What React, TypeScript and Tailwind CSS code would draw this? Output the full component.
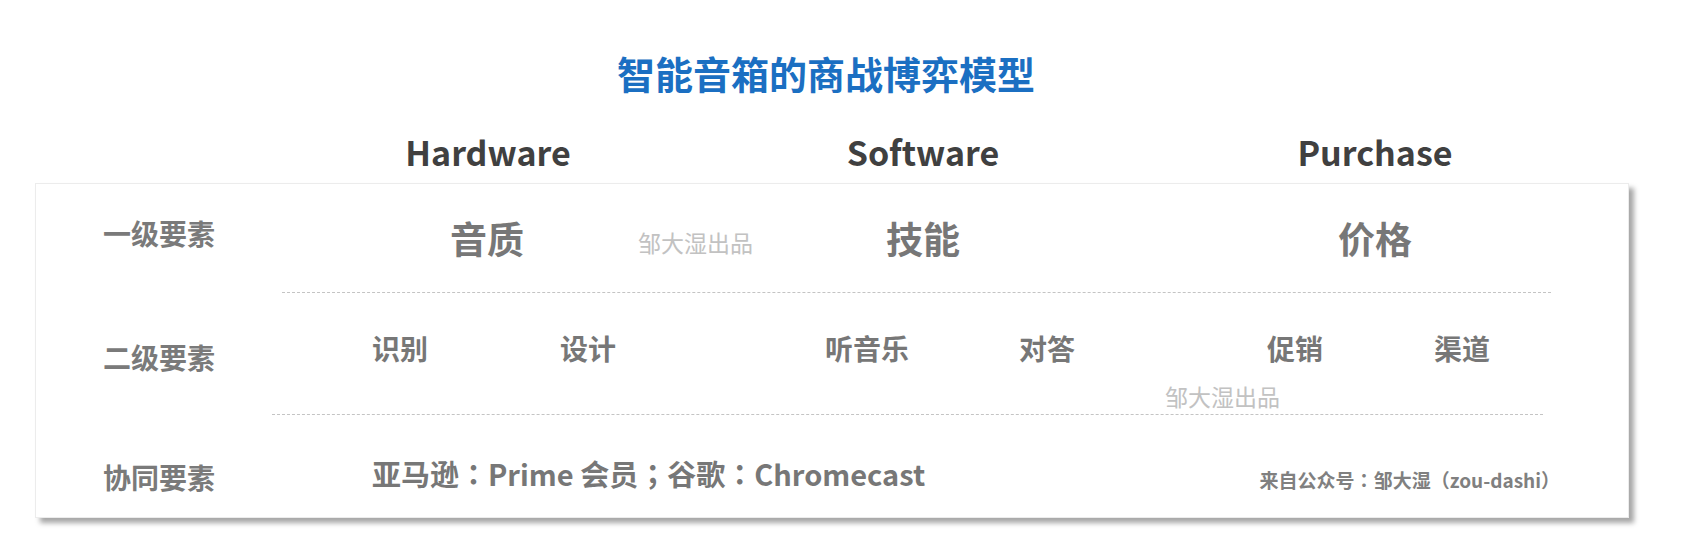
import React from "react";

const F = { fontFamily: '"Noto Sans CJK SC", "Noto Sans", sans-serif' };
const TC = { fontFamily: '"Noto Sans CJK TC", "Noto Sans CJK SC", sans-serif' };

export default function App() {
  return (
    <div className="w-[1689px] h-[545px] bg-white overflow-hidden" style={F}>
      {/* Title */}
      <div className="pt-[54px] flex justify-center">
        <div className="ml-[-37px] text-[38px] leading-none font-bold text-[#1b6fc2] whitespace-nowrap">
          智能音箱的商战博弈模型
        </div>
      </div>

      {/* Column headers */}
      <div className="mt-[43px] flex pl-[36px]">
        <div className="w-[234px] shrink-0" />
        <div className="w-[436px] shrink-0 flex justify-center text-[34px] leading-none font-bold text-[#404040]">Hardware</div>
        <div className="w-[434px] shrink-0 flex justify-center text-[34px] leading-none font-bold text-[#404040]">Software</div>
        <div className="w-[470px] shrink-0 flex justify-center text-[34px] leading-none font-bold text-[#404040]">Purchase</div>
      </div>

      {/* Card */}
      <div className="mt-[14px] ml-[35px] w-[1594px] h-[335px] bg-white border border-[#ececec] shadow-[5px_5px_5px_rgba(0,0,0,0.35)] flex flex-col">
        {/* Row 1 */}
        <div className="h-[108px] flex items-start">
          <div className="w-[234px] shrink-0 pl-[67px] mt-[35px] text-[28px] leading-none font-bold text-[#7a7a7a] whitespace-nowrap">一级要素</div>
          <div className="w-[436px] shrink-0 flex items-start pl-[180px]">
            <div className="shrink-0 whitespace-nowrap mt-[36px] text-[37px] leading-none font-bold text-[#777777]">音质</div>
            <div className="shrink-0 mt-[47px] ml-[114px] text-[23px] leading-none text-[#c2c2c2] whitespace-nowrap">邹大湿出品</div>
          </div>
          <div className="w-[434px] shrink-0 flex justify-center">
            <div className="mt-[36px] text-[37px] leading-none font-bold text-[#777777] whitespace-nowrap">技能</div>
          </div>
          <div className="w-[470px] shrink-0 flex justify-center">
            <div className="mt-[36px] text-[37px] leading-none font-bold text-[#777777] whitespace-nowrap">价格</div>
          </div>
        </div>
        <div className="ml-[246px] w-[1269px] border-t border-dashed border-[#c4c4c4]" />

        {/* Row 2 */}
        <div className="h-[121px] flex flex-col">
          <div className="flex items-start">
            <div className="w-[234px] shrink-0 pl-[67px] mt-[50px] text-[28px] leading-none font-bold text-[#7a7a7a] whitespace-nowrap">二级要素</div>
            <div className="w-[436px] shrink-0 flex items-start pl-[102px] mt-[41px] text-[28px] leading-none font-bold text-[#777777] whitespace-nowrap">
              <span>识别</span>
              <span className="ml-[132px]">设计</span>
            </div>
            <div className="w-[434px] shrink-0 flex items-start pl-[119px] mt-[41px] text-[28px] leading-none font-bold text-[#777777] whitespace-nowrap">
              <span>听音乐</span>
              <span className="ml-[110px]">对答</span>
            </div>
            <div className="w-[470px] shrink-0 flex items-start pl-[127px] mt-[41px] text-[28px] leading-none font-bold text-[#777777] whitespace-nowrap">
              <span>促销</span>
              <span className="ml-[111px]">渠道</span>
            </div>
          </div>
          <div className="ml-[1129px] mt-[14px] text-[23px] leading-none text-[#c2c2c2] whitespace-nowrap">邹大湿出品</div>
        </div>
        <div className="ml-[236px] w-[1271px] border-t border-dashed border-[#c4c4c4]" />

        {/* Row 3 */}
        <div className="flex-1 flex items-start">
          <div className="w-[234px] shrink-0 pl-[67px] mt-[48px] text-[28px] leading-none font-bold text-[#7a7a7a] whitespace-nowrap">协同要素</div>
          <div className="pl-[102px] mt-[44px] text-[29px] leading-none font-bold text-[#777777] whitespace-nowrap">
            亚马逊<span style={TC}>：</span>Prime 会员<span style={TC}>；</span>谷歌<span style={TC}>：</span>Chromecast
          </div>
          <div className="ml-auto mr-[68px] mt-[55px] text-[19px] leading-none font-bold text-[#808080] whitespace-nowrap">
            来自公众号<span style={TC}>：</span>邹大湿<span style={TC}>（</span>zou-dashi<span style={TC}>）</span>
          </div>
        </div>
      </div>
    </div>
  );
}
